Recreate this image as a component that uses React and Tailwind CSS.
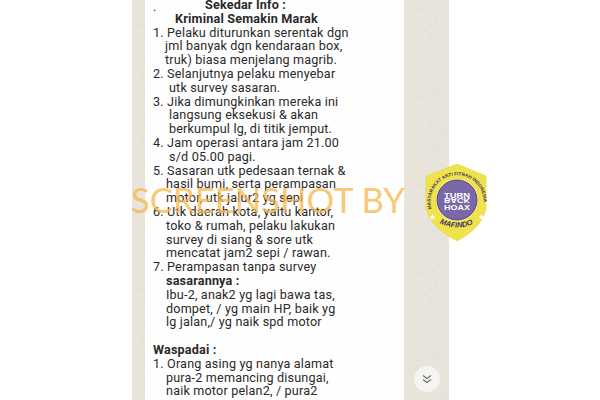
const lines = [
  { t: "Sekedar Info :", x: 205, b: true, d: "." },
  { t: "Kriminal Semakin Marak", x: 175, b: true, tr: "tracking-[0.2px]" },
  { t: "1. Pelaku diturunkan serentak dgn", x: 153 },
  { t: "jml banyak dgn kendaraan box,", x: 165 },
  { t: "truk) biasa menjelang magrib.", x: 165 },
  { t: "2. Selanjutnya pelaku menyebar", x: 153 },
  { t: "utk survey sasaran.", x: 169 },
  { t: "3. Jika dimungkinkan mereka ini", x: 153 },
  { t: "langsung eksekusi & akan", x: 169 },
  { t: "berkumpul lg, di titik jemput.", x: 169 },
  { t: "4. Jam operasi antara jam 21.00", x: 153 },
  { t: "s/d 05.00 pagi.", x: 169 },
  { t: "5. Sasaran utk pedesaan ternak &", x: 153 },
  { t: "hasil bumi, serta perampasan", x: 166 },
  { t: "motor, utk jalur2 yg sepi", x: 166 },
  { t: "6. Utk daerah kota, yaitu kantor,", x: 153 },
  { t: "toko & rumah, pelaku lakukan", x: 166 },
  { t: "survey di siang & sore utk", x: 166 },
  { t: "mencatat jam2 sepi / rawan.", x: 166 },
  { t: "7. Perampasan tanpa survey", x: 153 },
  { t: "sasarannya :", x: 166, b: true },
  { t: "Ibu-2, anak2 yg lagi bawa tas,", x: 166 },
  { t: "dompet, / yg main HP, baik yg", x: 166 },
  { t: "lg jalan,/ yg naik spd motor", x: 166 },
  { t: "\u00a0", x: 153 },
  { t: "Waspadai :", x: 153, b: true },
  { t: "1. Orang asing yg nanya alamat", x: 153 },
  { t: "pura-2 memancing disungai,", x: 166 },
  { t: "naik motor pelan2, / pura2", x: 166 },
];

const doodles = [];
for (let y = 6, i = 0; y < 400; y += 22, i++) {
  doodles.push(`M${2 + (i % 3) * 2} ${y} q4 -6 8 -1 t-2 8`);
  doodles.push(`M${280 + (i % 4) * 6} ${y + 6} q6 -7 12 -1 t-4 9 m10 -14 q5 3 8 -2`);
  doodles.push(`M${296 + (i % 3) * 5} ${y + 15} a4 4 0 1 0 6 -3`);
}

export default function App() {
  return (
    <div className="relative w-[600px] h-[400px] overflow-hidden bg-white font-['Roboto',sans-serif]">
      <div className="relative ml-[132px] w-[317px] h-[400px] bg-[#e9e4db] pl-[13px] pr-[45px]">
        <svg className="absolute left-0 top-0" width="317" height="400" fill="none" stroke="#ddd7cc" strokeWidth="0.5">
          <path d={doodles.join(" ")} />
        </svg>
        <div className="relative h-[400px] bg-[#fefefe] overflow-hidden">
          <div className="-mt-[2px]">
            {lines.map((l, i) => (
              <div
                key={i}
                style={{ paddingLeft: l.x - 145 }}
                className={`relative h-[13.8px] leading-[13.8px] text-[12.6px] whitespace-nowrap text-[#2a2a2a] ${l.tr || "tracking-[0.18px]"} ${l.b ? "font-bold" : ""}`}
              >
                {l.d && <span className="absolute left-[8px] top-[2px] font-normal">{l.d}</span>}
                {l.t}
              </div>
            ))}
          </div>
        </div>
      </div>

      <div className="absolute left-[414px] top-[366px] w-[26px] h-[26px] rounded-full bg-[#f6f4f1] flex items-center justify-center">
        <svg width="14" height="14" viewBox="0 0 14 14" fill="none" stroke="#6f6f6f" strokeWidth="1.1">
          <path d="M3 3.5 L7 6.5 L11 3.5" />
          <path d="M3 7.5 L7 10.5 L11 7.5" />
        </svg>
      </div>

      <div className="absolute left-[131px] top-[179px] text-[34.7px] leading-[42px] whitespace-nowrap text-[#f9b748]/75 font-['Lato',sans-serif]">
        SCREENSHOT BY
      </div>

      <svg className="absolute left-[422px] top-[162px]" width="70" height="82" viewBox="0 0 70 82">
        <path d="M35 2 L64 14 L64 47 Q60 66 35 79 Q9 66 4 47 L4 14 Z" fill="#f0e24c" stroke="#e6d63c" strokeWidth="0.6" />
        <circle cx="35" cy="38" r="21" fill="#f8f4c8" />
        <circle cx="35" cy="38" r="20" fill="#7b68a8" stroke="#3f3560" strokeWidth="0.8" />
        <path id="ringTop" d="M9.5 47 A26.5 26.5 0 1 1 60.5 47" fill="none" />
        <text fontFamily="Liberation Sans" fontSize="4.7" fontWeight="700" fill="#3f3560">
          <textPath href="#ringTop">MASYARAKAT ANTI FITNAH INDONESIA</textPath>
        </text>
        <path id="ringBot" d="M14 59 Q35 72 56 59" fill="none" />
        <text fontFamily="Liberation Sans" fontSize="7.5" fontWeight="700" fontStyle="italic" fill="#3f3560">
          <textPath href="#ringBot" startOffset="4">MAFINDO</textPath>
        </text>
        <polygon points="10.5,52 11.5,54 13.5,54.3 12,55.6 12.4,57.6 10.5,56.6 8.6,57.6 9,55.6 7.5,54.3 9.5,54" fill="#ffffff" />
        <polygon points="59.5,52 60.5,54 62.5,54.3 61,55.6 61.4,57.6 59.5,56.6 57.6,57.6 58,55.6 56.5,54.3 58.5,54" fill="#ffffff" />
        <text x="35" y="35.5" textAnchor="middle" fontFamily="Liberation Sans" fontSize="7" fontWeight="700" fill="#ffffff" textLength="26" lengthAdjust="spacingAndGlyphs">TURN</text>
        <text x="35" y="-36.4" textAnchor="middle" fontFamily="Liberation Sans" fontSize="7" fontWeight="700" fill="#ffffff" textLength="26" lengthAdjust="spacingAndGlyphs" transform="scale(1 -1)">BACK</text>
        <text x="35" y="47.8" textAnchor="middle" fontFamily="Liberation Sans" fontSize="7" fontWeight="700" fill="#ffffff" textLength="26" lengthAdjust="spacingAndGlyphs">HOAX</text>
      </svg>
    </div>
  );
}
